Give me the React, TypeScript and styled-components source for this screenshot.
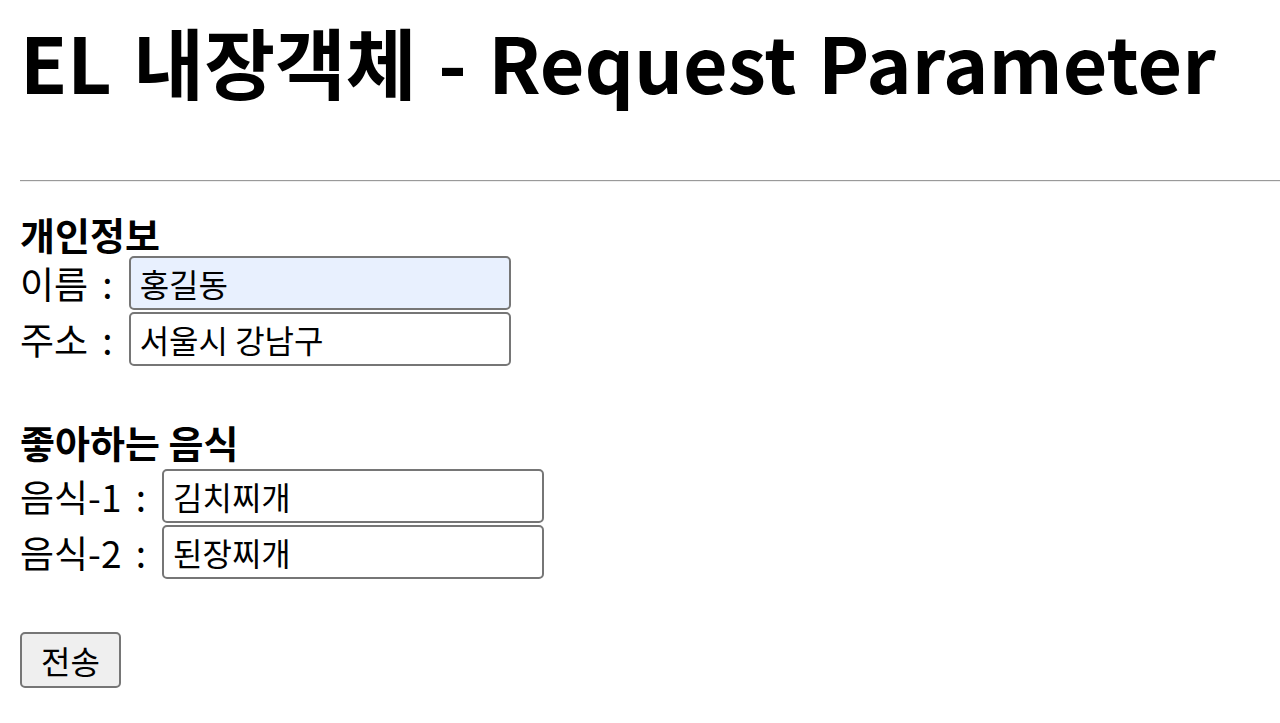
import React from "react";
import styled, { createGlobalStyle } from "styled-components";

const GlobalStyle = createGlobalStyle`
  body {
    margin: 0;
    background: #ffffff;
    color: #000000;
    font-family: "Noto Sans CJK KR", "Noto Sans", sans-serif;
  }
`;

const Page = styled.div`
  padding: 21px 0 0 20px;
`;

const Title = styled.h1`
  margin: 0;
  font-size: 77px;
  line-height: 80px;
  font-weight: 700;
  word-spacing: 4px;
  white-space: nowrap;
`;

const Divider = styled.hr`
  margin: 79px 0 0 0;
  border: 0;
  border-top: 1px solid #9a9a9a;
  border-bottom: 1px solid #eeeeee;
  height: 0;
`;

const Form = styled.form`
  display: flex;
  flex-direction: column;
`;

const SectionTitle = styled.div<{ $top: number; $bottom?: number }>`
  margin-top: ${(p) => p.$top}px;
  margin-bottom: ${(p) => p.$bottom ?? 0}px;
  font-size: 38px;
  font-weight: 700;
  line-height: 40px;
`;

const Row = styled.div`
  display: flex;
  align-items: center;
  height: 54px;
  margin-top: 2px;
  font-size: 37px;
`;

const Label = styled.label`
  white-space: pre;
  word-spacing: 6px;
  margin-right: 16px;
`;

const Field = styled.input<{ $filled?: boolean }>`
  box-sizing: border-box;
  width: 382px;
  height: 54px;
  padding: 0 9px;
  border: 2px solid #767676;
  border-radius: 5px;
  background: ${(p) => (p.$filled ? "#e8f0fe" : "#ffffff")};
  font-family: inherit;
  font-size: 32px;
  color: #000000;
  outline: none;
`;

const Submit = styled.button`
  align-self: flex-start;
  margin-top: 53px;
  box-sizing: border-box;
  width: 101px;
  height: 56px;
  border: 2px solid #767676;
  border-radius: 5px;
  background: #efefef;
  font-family: inherit;
  font-size: 32px;
  color: #000000;
  padding: 0;
`;

type FieldDef = { label: string; value: string; filled?: boolean };

const personal: FieldDef[] = [
  { label: "이름 :", value: "홍길동", filled: true },
  { label: "주소 :", value: "서울시 강남구" },
];

const foods: FieldDef[] = [
  { label: "음식-1 :", value: "김치찌개" },
  { label: "음식-2 :", value: "된장찌개" },
];

function FieldRow({ label, value, filled }: FieldDef) {
  return (
    <Row>
      <Label>{label}</Label>
      <Field type="text" defaultValue={value} $filled={filled} />
    </Row>
  );
}

export default function App() {
  return (
    <>
      <GlobalStyle />
      <Page>
        <Title>EL 내장객체 - Request Parameter</Title>
        <Divider />
        <Form onSubmit={(e) => e.preventDefault()}>
          <SectionTitle $top={32}>개인정보</SectionTitle>
          {personal.map((f) => (
            <FieldRow key={f.label} {...f} />
          ))}
          <SectionTitle $top={56} $bottom={5}>
            좋아하는 음식
          </SectionTitle>
          {foods.map((f) => (
            <FieldRow key={f.label} {...f} />
          ))}
          <Submit type="submit">전송</Submit>
        </Form>
      </Page>
    </>
  );
}
